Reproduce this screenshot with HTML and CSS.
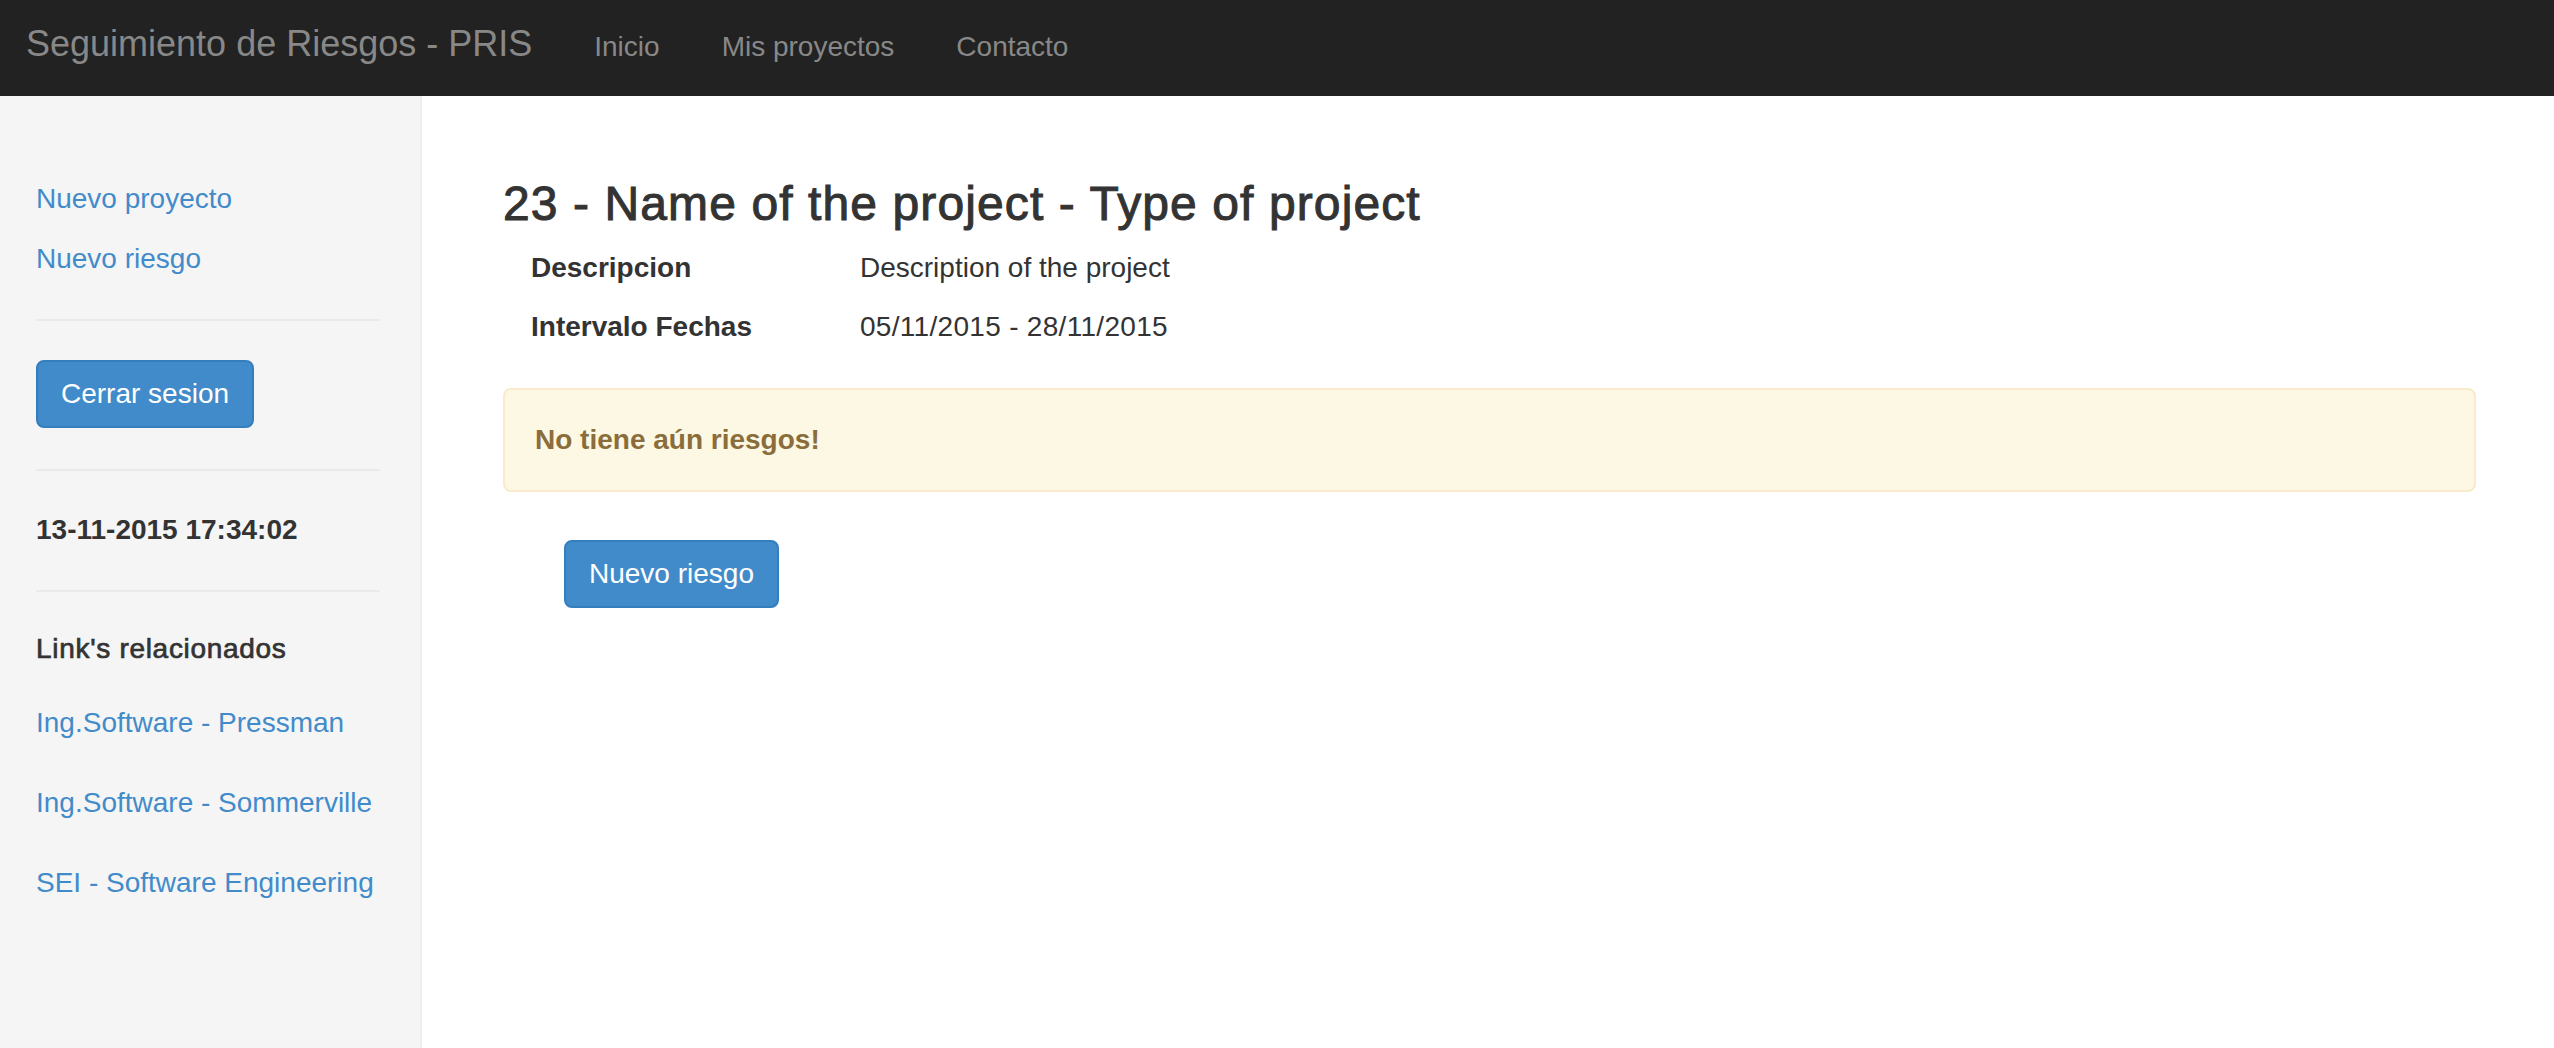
FILE: index.html
```html
<!DOCTYPE html>
<html lang="es">
<head>
<meta charset="utf-8">
<title>Seguimiento de Riesgos - PRIS</title>
<link rel="stylesheet" href="styles.css">
</head>
<body>
<header class="navbar">
  <a class="brand" href="#">Seguimiento de Riesgos - PRIS</a>
  <ul class="nav">
    <li><a href="#">Inicio</a></li>
    <li><a href="#">Mis proyectos</a></li>
    <li><a href="#">Contacto</a></li>
  </ul>
</header>
<div class="layout">
  <aside class="sidebar">
    <nav class="side-actions">
      <a class="side-link" href="#">Nuevo proyecto</a>
      <a class="side-link" href="#">Nuevo riesgo</a>
    </nav>
    <hr class="divider divider-actions">
    <button class="btn btn-logout" type="button">Cerrar sesion</button>
    <hr class="divider divider-logout">
    <p class="clock">13-11-2015 17:34:02</p>
    <hr class="divider divider-clock">
    <h5 class="related-title">Link's relacionados</h5>
    <ul class="related">
      <li><a href="#">Ing.Software - Pressman</a></li>
      <li><a href="#">Ing.Software - Sommerville</a></li>
      <li><a href="#">SEI - Software Engineering</a></li>
    </ul>
  </aside>
  <main class="main">
    <h3 class="project-title">23 - Name of the project - Type of project</h3>
    <div class="details">
      <div class="details-label">Descripcion</div>
      <div class="details-value">Description of the project</div>
      <div class="details-label">Intervalo Fechas</div>
      <div class="details-value details-dates">05/11/2015 - 28/11/2015</div>
    </div>
    <div class="alert">No tiene aún riesgos!</div>
    <button class="btn btn-new" type="button">Nuevo riesgo</button>
  </main>
</div>
</body>
</html>
```

FILE: styles.css
```css
* {
  box-sizing: border-box;
}

html,
body {
  margin: 0;
  height: 100%;
}

body {
  font-family: "Liberation Sans", Arial, Helvetica, sans-serif;
  font-size: 28px;
  line-height: 40px;
  color: #333;
  background: #fff;
  display: flex;
  flex-direction: column;
}

a {
  text-decoration: none;
}

/* ---------- Navbar ---------- */
.navbar {
  flex: 0 0 96px;
  background: #222;
  display: flex;
  align-items: baseline;
  padding-top: 24px;
}

.brand {
  font-size: 36px;
  line-height: 40px;
  color: #888;
  padding: 0 31px 0 26px;
}

.nav {
  display: flex;
  list-style: none;
  margin: 0;
  padding: 0;
}

.nav a {
  display: block;
  color: #888;
  padding: 0 31px;
  line-height: 40px;
}

/* ---------- Layout ---------- */
.layout {
  flex: 1;
  display: flex;
}

/* ---------- Sidebar ---------- */
.sidebar {
  flex: 0 0 422px;
  background: #f5f5f5;
  border-right: 2px solid #eee;
  padding: 73px 40px 0 36px;
}

.side-actions {
  display: flex;
  flex-direction: column;
  align-items: flex-start;
}

.side-link {
  display: block;
  padding: 10px 0;
  color: #428bca;
}

.divider {
  border: 0;
  height: 2px;
  background: #eaeaea;
  margin: 0;
}

.divider-actions {
  margin-top: 30px;
}

.divider-logout {
  margin-top: 41px;
}

.divider-clock {
  margin-top: 40px;
}

.btn {
  display: block;
  font-family: inherit;
  font-size: 28px;
  line-height: 40px;
  padding: 12px 23px;
  color: #fff;
  background: #428bca;
  border: 2px solid #357ebd;
  border-radius: 8px;
  cursor: pointer;
}

.btn-logout {
  margin-top: 39px;
}

.clock {
  margin: 39px 0 0;
  font-weight: bold;
}

.related-title {
  margin: 37px 0 0;
  font-size: 28px;
  line-height: 40px;
  font-weight: normal;
  letter-spacing: 0.7px;
  -webkit-text-stroke: 0.7px #333;
  color: #333;
}

.related {
  list-style: none;
  margin: 14px 0 0;
  padding: 0;
}

.related a {
  display: block;
  padding: 20px 0;
  color: #428bca;
}

/* ---------- Main ---------- */
.main {
  flex: 1;
  padding: 82px 78px 0 81px;
}

.project-title {
  margin: 0;
  font-size: 48px;
  line-height: 52px;
  font-weight: normal;
  letter-spacing: 1.1px;
  -webkit-text-stroke: 1px #333;
  color: #333;
}

.details {
  display: grid;
  grid-template-columns: 329px auto;
  margin: 9px 0 0 28px;
}

.details-label,
.details-value {
  padding: 9px 0 10px;
}

.details-label {
  font-weight: bold;
}

.details-dates {
  letter-spacing: 0.3px;
}

.alert {
  margin-top: 31px;
  padding: 30px;
  background: #fcf8e3;
  border: 2px solid #faebcc;
  border-radius: 8px;
  color: #8a6d3b;
  font-weight: bold;
}

.btn-new {
  margin: 48px 0 0 61px;
}
```
